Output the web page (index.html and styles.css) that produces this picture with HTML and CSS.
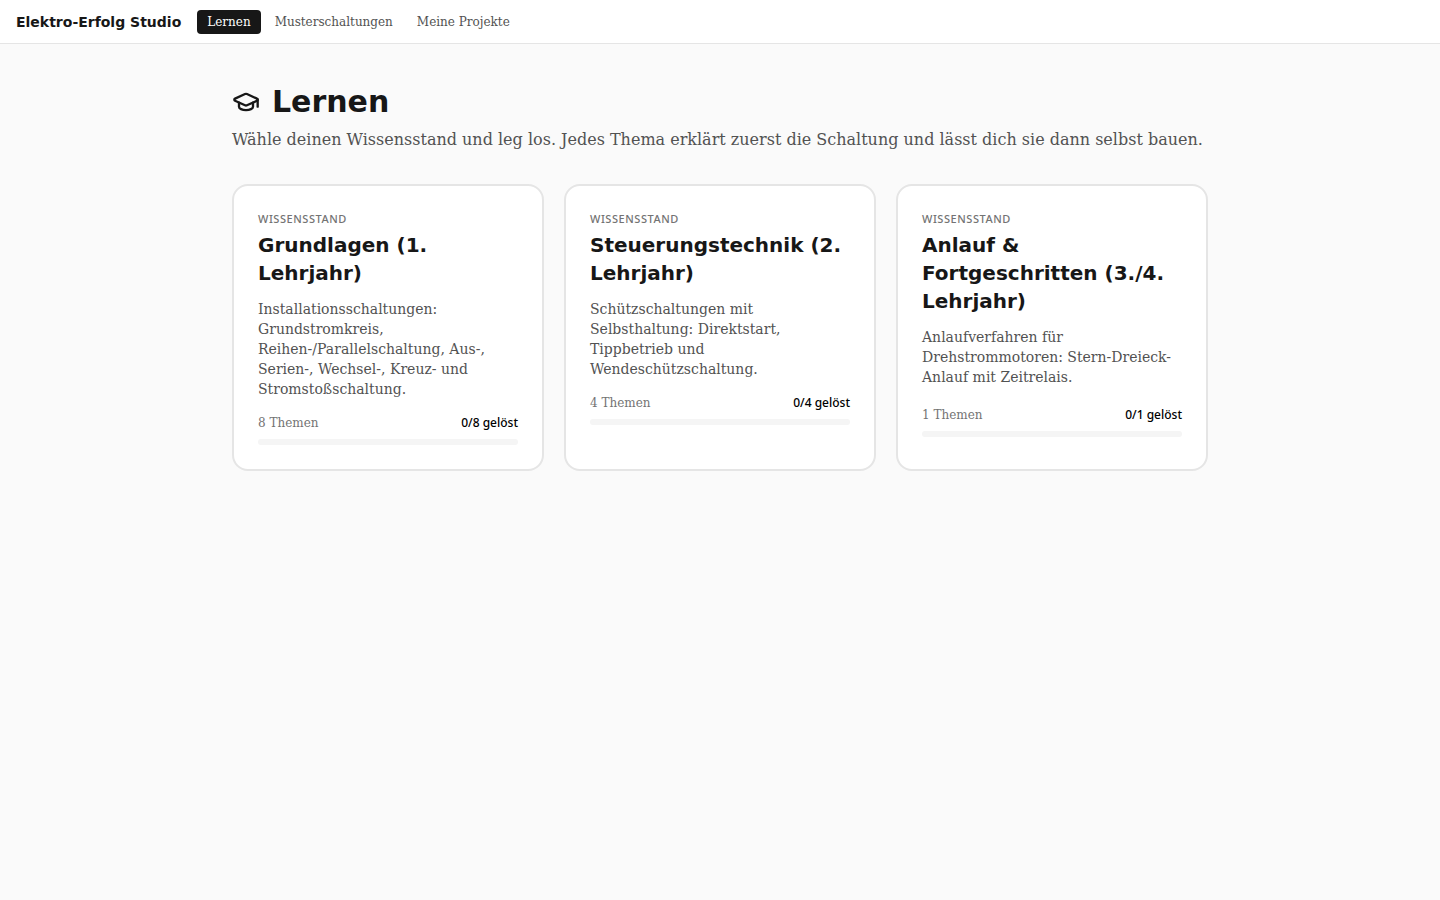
FILE: index.html
```html
<!DOCTYPE html>
<html lang="de">
<head>
<meta charset="utf-8">
<meta name="viewport" content="width=device-width, initial-scale=1">
<title>Elektro-Erfolg Studio</title>
<link rel="stylesheet" href="styles.css">
</head>
<body>
<header class="topbar">
  <span class="brand">Elektro-Erfolg Studio</span>
  <nav class="nav">
    <button type="button" class="nav-button active" aria-current="page">Lernen</button>
    <button type="button" class="nav-button">Musterschaltungen</button>
    <button type="button" class="nav-button">Meine Projekte</button>
  </nav>
</header>
<main class="page">
  <div class="heading">
    <svg class="heading-icon" viewBox="0 0 24 24" fill="none" stroke="currentColor" stroke-width="2" stroke-linecap="round" stroke-linejoin="round" aria-hidden="true">
      <path d="M21.42 10.922a1 1 0 0 0-.019-1.838L12.83 5.18a2 2 0 0 0-1.66 0L2.6 9.08a1 1 0 0 0 0 1.832l8.57 3.908a2 2 0 0 0 1.66 0z"/>
      <path d="M22 10v6"/>
      <path d="M6 12.5V16a6 3 0 0 0 12 0v-3.5"/>
    </svg>
    <h1 class="title">Lernen</h1>
  </div>
  <p class="intro">Wähle deinen Wissensstand und leg los. Jedes Thema erklärt zuerst die Schaltung und lässt dich sie dann selbst bauen.</p>
  <div class="levels">
    <a class="card" href="#grundlagen">
      <div class="eyebrow">Wissensstand</div>
      <h2 class="card-title">Grundlagen (1. Lehrjahr)</h2>
      <p class="description">Installationsschaltungen: Grundstromkreis, Reihen-/Parallelschaltung, Aus-, Serien-, Wechsel-, Kreuz- und Stromstoßschaltung.</p>
      <div class="stats"><span class="topics">8 Themen</span><span class="solved">0/8 gelöst</span></div>
      <div class="track" role="progressbar" aria-label="Gelöst" aria-valuemin="0" aria-valuenow="0" aria-valuemax="8"></div>
    </a>
    <a class="card" href="#steuerungstechnik">
      <div class="eyebrow">Wissensstand</div>
      <h2 class="card-title">Steuerungstechnik (2. Lehrjahr)</h2>
      <p class="description">Schützschaltungen mit Selbsthaltung: Direktstart, Tippbetrieb und Wendeschützschaltung.</p>
      <div class="stats"><span class="topics">4 Themen</span><span class="solved">0/4 gelöst</span></div>
      <div class="track" role="progressbar" aria-label="Gelöst" aria-valuemin="0" aria-valuenow="0" aria-valuemax="4"></div>
    </a>
    <a class="card" href="#anlauf">
      <div class="eyebrow">Wissensstand</div>
      <h2 class="card-title">Anlauf &amp; Fortgeschritten (3./4. Lehrjahr)</h2>
      <p class="description">Anlaufverfahren für Drehstrommotoren: Stern-Dreieck-Anlauf mit Zeitrelais.</p>
      <div class="stats"><span class="topics">1 Themen</span><span class="solved">0/1 gelöst</span></div>
      <div class="track" role="progressbar" aria-label="Gelöst" aria-valuemin="0" aria-valuenow="0" aria-valuemax="1"></div>
    </a>
  </div>
</main>
</body>
</html>
```

FILE: styles.css
```css
*,
*::before,
*::after {
  box-sizing: border-box;
}

body {
  margin: 0;
  min-height: 100vh;
  background: #fafafa;
  color: #171717;
  font-family: "DejaVu Serif", serif;
  font-size: 16px;
  line-height: 24px;
}

h1,
h2,
p {
  margin: 0;
}

.topbar {
  display: flex;
  align-items: center;
  gap: 16px;
  min-height: 44px;
  padding: 0 16px;
  background: #fff;
  border-bottom: 1px solid #e5e5e5;
}

.brand {
  font-family: "DejaVu Sans", sans-serif;
  font-size: 14px;
  font-weight: 700;
  line-height: 20px;
}

.nav {
  display: flex;
  gap: 4px;
}

.nav-button {
  padding: 4px 10px;
  border: 0;
  border-radius: 4px;
  background: transparent;
  color: #525252;
  font-family: inherit;
  font-size: 12px;
  line-height: 16px;
  cursor: pointer;
}

.nav-button.active {
  background: #171717;
  color: #fff;
}

.page {
  max-width: 1024px;
  margin: 0 auto;
  padding: 40px 24px;
}

.heading {
  display: flex;
  align-items: center;
  gap: 12px;
  margin-bottom: 8px;
}

.heading-icon {
  width: 28px;
  height: 28px;
}

.title {
  font-family: "DejaVu Sans", sans-serif;
  font-size: 30px;
  font-weight: 700;
  line-height: 36px;
}

.intro {
  margin-bottom: 32px;
  color: #525252;
}

.levels {
  display: grid;
  grid-template-columns: repeat(auto-fit, minmax(260px, 1fr));
  gap: 20px;
}

.card {
  padding: 24px;
  border: 2px solid #e5e5e5;
  border-radius: 16px;
  background: #fff;
  color: inherit;
  text-decoration: none;
}

.eyebrow {
  margin-bottom: 4px;
  color: #737373;
  font-family: "Noto Sans", sans-serif;
  font-size: 11px;
  font-weight: 500;
  line-height: 17px;
  letter-spacing: 0.05em;
  text-transform: uppercase;
}

.card-title {
  margin-bottom: 12px;
  font-family: "DejaVu Sans", sans-serif;
  font-size: 20px;
  font-weight: 700;
  line-height: 28px;
}

.description {
  min-height: 64px;
  margin-bottom: 16px;
  color: #525252;
  font-size: 14px;
  line-height: 20px;
}

.stats {
  display: flex;
  justify-content: space-between;
  margin-bottom: 8px;
  font-size: 12px;
  line-height: 16px;
}

.topics {
  color: #737373;
}

.solved {
  color: #000;
  font-family: "Noto Sans", sans-serif;
  font-weight: 500;
}

.track {
  height: 6px;
  border-radius: 3px;
  background: #f5f5f5;
}
```
